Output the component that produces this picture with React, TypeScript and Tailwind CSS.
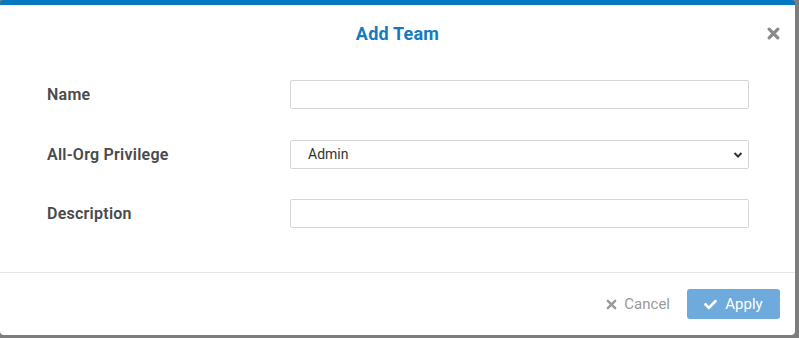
import React from "react";
import { FaCheck } from "react-icons/fa";

function XIcon({ size, stroke, color }: { size: number; stroke: number; color: string }) {
  return (
    <svg width={size} height={size} viewBox="0 0 12 12">
      <path d="M2 2 L10 10 M10 2 L2 10" stroke={color} strokeWidth={stroke} strokeLinecap="round" fill="none" />
    </svg>
  );
}

export default function App() {
  return (
    <div className="w-[799px] h-[338px] bg-[#7d7d7d] overflow-hidden" style={{ fontFamily: "Roboto, 'Liberation Sans', sans-serif" }}>
      <div className="w-[795px] h-[335px] bg-white rounded-[4px] border-t-[5px] border-[#0479c1] flex flex-col">
        <div className="relative h-[56px] flex items-center justify-center">
          <h2 className="text-[18px] font-bold text-[#1479bf] pt-[1px] tracking-[0.2px]">Add Team</h2>
          <button className="absolute right-[15px] top-[22px]">
            <XIcon size={13} stroke={3} color="#8a8a8a" />
          </button>
        </div>
        <div className="flex flex-col pt-[19px] pl-[47px] h-[211px]">
          <div className="flex items-center">
            <label className="w-[243px] text-[16px] font-semibold text-[#4a4a4a] tracking-[0.25px]">Name</label>
            <div className="w-[459px] h-[29px] border border-[#d6d6d6] rounded-[2px]" />
          </div>
          <div className="flex items-center mt-[31px]">
            <label className="w-[243px] text-[16px] font-semibold text-[#4a4a4a] tracking-[0.25px]">All-Org Privilege</label>
            <div className="w-[459px] h-[29px] border border-[#d6d6d6] rounded-[2px] flex items-center justify-between pl-[17px] pr-[5px]">
              <span className="text-[14px] text-[#333]">Admin</span>
              <svg width="10" height="8" viewBox="0 0 10 8">
                <path d="M1.5 2 L5 5.5 L8.5 2" stroke="#333" strokeWidth="2" fill="none" />
              </svg>
            </div>
          </div>
          <div className="flex items-center mt-[30px]">
            <label className="w-[243px] text-[16px] font-semibold text-[#4a4a4a] tracking-[0.25px]">Description</label>
            <div className="w-[459px] h-[29px] border border-[#d6d6d6] rounded-[2px]" />
          </div>
        </div>
        <div className="border-t border-[#e6e6e6] flex-1 flex items-center justify-end pr-[15px]">
          <button className="flex items-center gap-[7px] text-[15px] text-[#9a9a9a] mr-[17px]">
            <XIcon size={11} stroke={2.6} color="#9a9a9a" />
            <span>Cancel</span>
          </button>
          <button className="w-[93px] h-[30px] rounded-[3px] bg-[#6eaadb] text-white text-[15px] flex items-center justify-center gap-[8px]">
            <FaCheck className="w-[13px] h-[13px]" />
            <span>Apply</span>
          </button>
        </div>
      </div>
    </div>
  );
}
